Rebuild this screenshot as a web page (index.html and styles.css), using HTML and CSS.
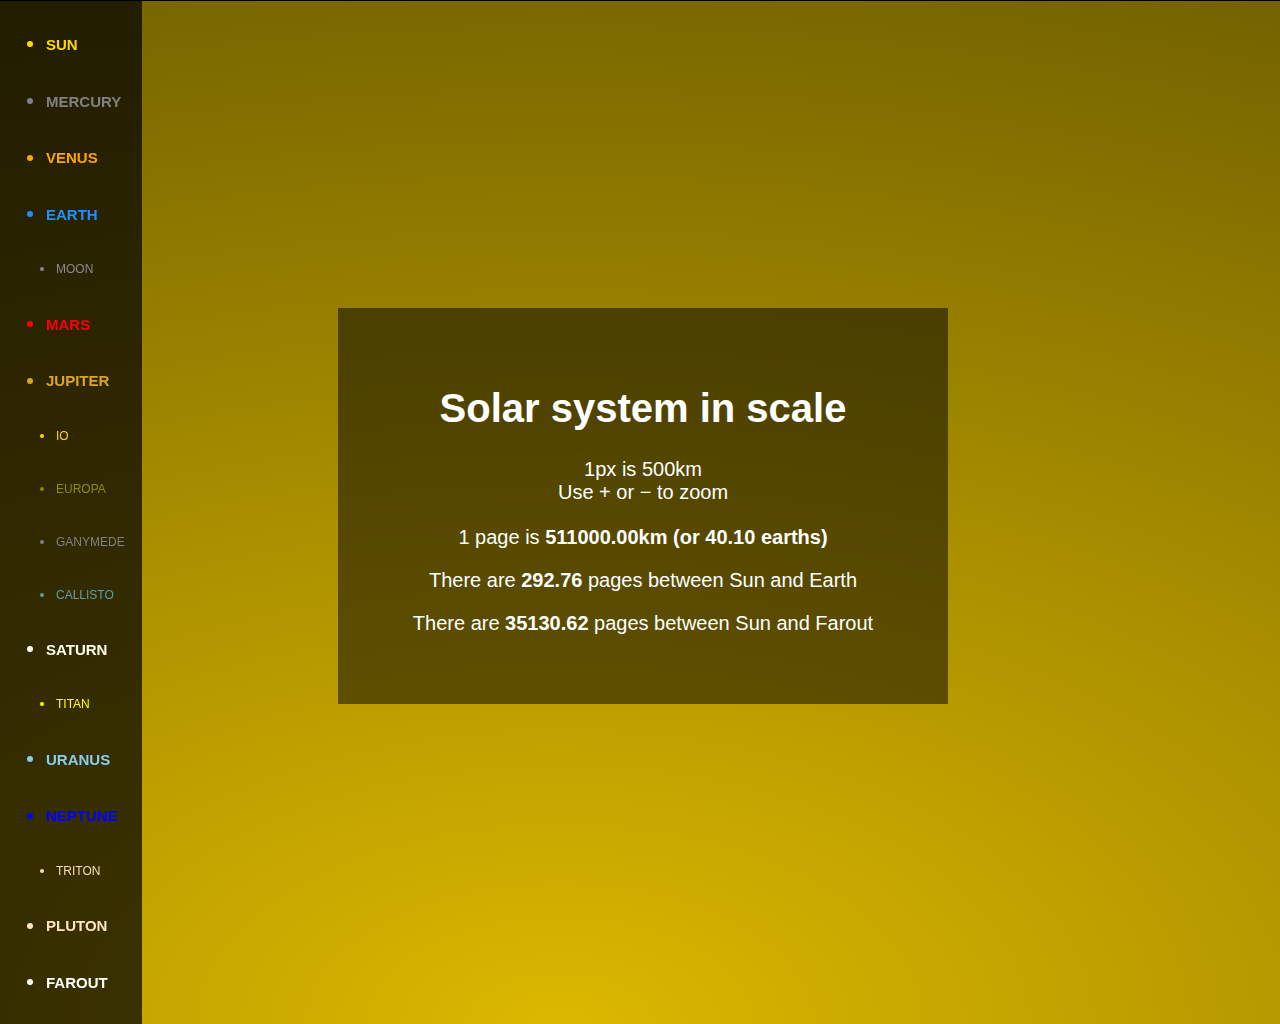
FILE: index.html
```html
<!DOCTYPE html>
<html lang="en">
<head>
<meta charset="utf-8">
<title>Solar system in scale</title>
<link rel="stylesheet" href="styles.css">
</head>
<body>
<nav class="sidebar">
  <ul class="bodies">
    <li class="item planet sun">SUN</li>
    <li class="item planet mercury">MERCURY</li>
    <li class="item planet venus">VENUS</li>
    <li class="item planet earth">EARTH</li>
    <li class="item moon c-moon">MOON</li>
    <li class="item planet mars">MARS</li>
    <li class="item planet jupiter">JUPITER</li>
    <li class="item moon io">IO</li>
    <li class="item moon europa">EUROPA</li>
    <li class="item moon ganymede">GANYMEDE</li>
    <li class="item moon callisto">CALLISTO</li>
    <li class="item planet saturn">SATURN</li>
    <li class="item moon titan">TITAN</li>
    <li class="item planet uranus">URANUS</li>
    <li class="item planet neptune">NEPTUNE</li>
    <li class="item moon triton">TRITON</li>
    <li class="item planet pluton">PLUTON</li>
    <li class="item planet farout">FAROUT</li>
  </ul>
</nav>
<main class="stage">
  <section class="card">
    <h1 class="title">Solar system in scale</h1>
    <p class="info scale">1px is 500km<br>Use <span class="key">+</span> or <span class="key">−</span> to zoom</p>
    <p class="info">1 page is <b>511000.00km (or 40.10 earths)</b></p>
    <p class="info">There are <b>292.76</b> pages between Sun and Earth</p>
    <p class="info">There are <b>35130.62</b> pages between Sun and Farout</p>
  </section>
</main>
</body>
</html>
```

FILE: styles.css
```css
html, body {
  margin: 0;
  padding: 0;
  height: 100%;
}

body {
  font-family: "Liberation Sans", Arial, sans-serif;
  color: #fff;
  border-top: 1px solid #000;
  box-sizing: border-box;
  background: radial-gradient(ellipse 2000px 1100px at 560px 1024px, #dcb800 0%, #736200 100%);
  background-attachment: fixed;
  overflow: hidden;
}

.sidebar {
  position: fixed;
  top: 1px;
  left: 0;
  bottom: 0;
  width: 142px;
  background: rgba(0, 0, 0, 0.71);
}

.bodies {
  list-style: none;
  margin: 0;
  padding: 15px 0 0 0;
}

.item {
  display: flex;
  align-items: center;
  white-space: nowrap;
}

.item::before {
  content: "";
  border-radius: 50%;
  background: currentColor;
  flex: none;
}

.planet {
  height: 56.7px;
  font-size: 15px;
  font-weight: bold;
  padding-left: 27px;
}

.planet::before {
  width: 6px;
  height: 6px;
  margin-right: 13px;
}

.moon {
  height: 53px;
  font-size: 12px;
  padding-left: 40px;
}

.moon::before {
  width: 4px;
  height: 4px;
  margin-right: 12px;
}

.sun { color: #ffd700; }
.mercury { color: #808080; }
.venus { color: #ffa500; }
.earth { color: #1e90ff; }
.c-moon { color: #8a8a8a; }
.mars { color: #ff0000; }
.jupiter { color: #daa520; }
.io { color: #ffd700; }
.europa { color: #8b8b00; }
.ganymede { color: #808080; }
.callisto { color: #5f9ea0; }
.saturn { color: #fffff0; }
.titan { color: #ffff00; }
.uranus { color: #87ceeb; }
.neptune { color: #0000ff; }
.triton { color: #f5deb3; }
.pluton { color: #ffe4c4; }
.farout { color: #ffffff; }

.stage {
  height: 100%;
  display: flex;
  justify-content: center;
  align-items: flex-start;
  padding: 307px 0 0 6px;
  box-sizing: border-box;
}

.card {
  width: 610px;
  height: 396px;
  box-sizing: border-box;
  padding: 50px 20px;
  background: rgba(0, 0, 0, 0.5);
  text-align: center;
}

.title {
  font-size: 40px;
  font-weight: bold;
  margin: 27px 0;
  line-height: 46px;
}

.info {
  font-size: 20px;
  margin: 20px 0;
  line-height: 23px;
}

.info.scale {
  margin-bottom: 22px;
}

.info b {
  font-weight: bold;
}
```
